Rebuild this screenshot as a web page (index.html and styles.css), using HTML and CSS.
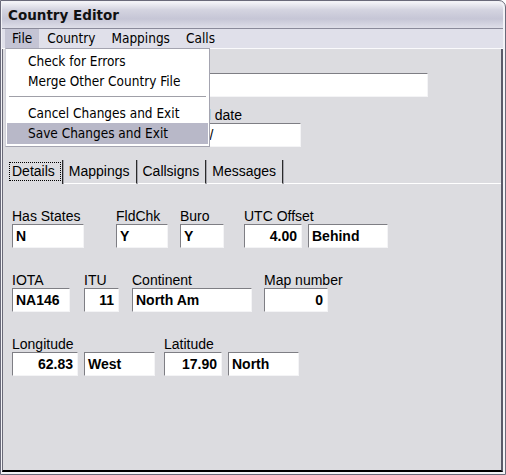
FILE: index.html
```html
<!doctype html>
<html lang="en">
<head>
    <meta charset="UTF-8">
    <meta name="viewport" content="width=device-width, initial-scale=1.0">
    <title>Country Editor</title>
    <link rel="stylesheet" href="styles.css">
</head>
<body>
<div class="window">
    <div class="titlebar">Country Editor</div>

    <div class="menubar">
        <span class="menu-item open">File</span>
        <span class="menu-item">Country</span>
        <span class="menu-item">Mappings</span>
        <span class="menu-item">Calls</span>
    </div>

    <div class="client">
        <!-- country header (mostly under the open menu) -->
        <div class="head">
            <div class="field f-name">
                <label></label>
                <div class="box"></div>
            </div>
            <div class="row head-dates">
                <div class="field f-start">
                    <label></label>
                    <div class="box date"></div>
                </div>
                <div class="field f-end">
                    <label>End date</label>
                    <div class="box date">     /</div>
                </div>
            </div>
        </div>

        <div class="tabs">
            <span class="tab selected"><span class="focus">Details</span></span>
            <span class="tab">Mappings</span>
            <span class="tab">Callsigns</span>
            <span class="tab">Messages</span>
            <span class="tab-fill"></span>
        </div>

        <!-- details page -->
        <div class="page">
            <div class="row">
                <div class="field f-states">
                    <label>Has States</label>
                    <div class="box">N</div>
                </div>
                <div class="field f-fldchk">
                    <label>FldChk</label>
                    <div class="box">Y</div>
                </div>
                <div class="field f-buro">
                    <label>Buro</label>
                    <div class="box">Y</div>
                </div>
                <div class="field f-utc">
                    <label>UTC Offset</label>
                    <div class="pair">
                        <div class="box num w-utc">4.00</div>
                        <div class="box w-dir">Behind</div>
                    </div>
                </div>
            </div>

            <div class="row">
                <div class="field f-iota">
                    <label>IOTA</label>
                    <div class="box">NA146</div>
                </div>
                <div class="field f-itu">
                    <label>ITU</label>
                    <div class="box num">11</div>
                </div>
                <div class="field f-continent">
                    <label>Continent</label>
                    <div class="box">North Am</div>
                </div>
                <div class="field f-map">
                    <label>Map number</label>
                    <div class="box num">0</div>
                </div>
            </div>

            <div class="row">
                <div class="field f-lon">
                    <label>Longitude</label>
                    <div class="pair">
                        <div class="box num w-lon">62.83</div>
                        <div class="box w-hemi">West</div>
                    </div>
                </div>
                <div class="field f-lat">
                    <label>Latitude</label>
                    <div class="pair">
                        <div class="box num w-lat">17.90</div>
                        <div class="box w-hemi">North</div>
                    </div>
                </div>
            </div>
        </div>
    </div>

    <!-- open File menu -->
    <ul class="dropdown">
        <li>Check for Errors</li>
        <li>Merge Other Country File</li>
        <li class="sep"></li>
        <li>Cancel Changes and Exit</li>
        <li class="hot">Save Changes and Exit</li>
    </ul>
</div>
</body>
</html>
```

FILE: styles.css
```css
* {
    box-sizing: border-box;
}

body {
    margin: 0;
    background: #fff;
}

.window {
    position: relative;
    width: 506px;
    height: 475px;
    display: flex;
    flex-direction: column;
    padding: 1px 2px 2px 1px;
    border: 1px solid #6a6a7a;
    border-radius: 0 7px 0 0;
    background: #f2f2f6;
    font-family: "Liberation Sans", Arial, sans-serif;
    font-size: 14px;
    color: #000;
}

.titlebar {
    height: 26px;
    padding-left: 6px;
    line-height: 26px;
    border-radius: 0 6px 0 0;
    background: linear-gradient(#f4f4f8 0%, #d4d4e0 30%, #c6c6d6 65%, #dedee8 100%);
    font-family: "DejaVu Sans", sans-serif;
    font-weight: bold;
    font-size: 13.5px;
    color: #111;
}

.menubar {
    display: flex;
    height: 21px;
    padding-left: 3px;
    border-top: 1px solid #8a8a9a;
    border-bottom: 1px solid #fafafc;
    background: #e0e0ea;
    font-family: "DejaVu Sans Condensed", "DejaVu Sans", sans-serif;
    font-size: 13.5px;
    line-height: 19px;

    .menu-item {
        padding: 0 8px;

        &.open {
            background: #c4c4d4;
            padding: 0 7px;
        }
    }
}

.client {
    flex: 1;
    border-left: 1px solid #6a6a78;
    border-right: 2px solid #5a5a6a;
    border-bottom: 2px solid #000;
    background: #dcdce0;
}

.row {
    display: flex;
}

.field {
    display: flex;
    flex-direction: column;

    label {
        height: 16px;
        line-height: 16px;
        white-space: nowrap;
    }
}

.pair {
    display: flex;
    gap: 6px;
}

.box {
    height: 24px;
    padding: 0 3px;
    border-top: 1px solid #7e7e84;
    border-left: 1px solid #7e7e84;
    border-right: 1px solid #f4f4f6;
    border-bottom: 1px solid #f4f4f6;
    background: #fff;
    font-weight: bold;
    line-height: 23px;
    white-space: pre;
    overflow: hidden;

    &.num {
        text-align: right;
        padding-right: 4px;
    }

    &.date {
        font-weight: normal;
    }
}

/* header block above the tabs */
.head {
    padding: 8px 0 0 9px;

    .f-name .box {
        width: 416px;
    }

    .head-dates {
        margin-top: 10px;
    }

    .f-start .box {
        width: 150px;
    }

    .f-end {
        margin-left: 24px;

        .box {
            width: 115px;
        }
    }
}

.tabs {
    display: flex;
    height: 24px;
    margin-top: 13px;
    padding-left: 2px;
    line-height: 23px;

    .tab {
        padding: 0 6px 0 5px;
        border-right: 1px solid #2a2a2a;
        border-bottom: 1px solid #fff;
        box-shadow: 1px 0 0 #a4a4ac;
        margin-right: 1px;

        &.selected {
            padding: 2px 1px 0 4px;
            border-bottom: none;
        }
    }

    .focus {
        display: block;
        height: 19px;
        padding: 0 5px 0 2px;
        line-height: 17px;
        border: 1px dotted #000;
    }

    .tab-fill {
        flex: 1;
        border-bottom: 1px solid #fff;
    }
}

.page {
    padding: 24px 0 0 9px;

    .row + .row {
        margin-top: 24px;
    }
}

/* details page field widths and spacing */
.f-states .box { width: 72px; }
.f-fldchk { margin-left: 32px; }
.f-fldchk .box { width: 52px; }
.f-buro { margin-left: 12px; }
.f-buro .box { width: 44px; }
.f-utc { margin-left: 20px; }
.w-utc { width: 58px; }
.w-dir { width: 80px; }

.f-iota .box { width: 58px; }
.f-itu { margin-left: 14px; }
.f-itu .box { width: 35px; }
.f-continent { margin-left: 13px; }
.f-continent .box { width: 120px; }
.f-map { margin-left: 12px; }
.f-map .box { width: 64px; }

.w-lon { width: 66px; }
.w-lat { width: 58px; }
.w-hemi { width: 71px; }
.f-lat { margin-left: 9px; }

.dropdown {
    position: absolute;
    left: 4px;
    top: 47px;
    width: 205px;
    margin: 0;
    padding: 2px 1px;
    list-style: none;
    background: #fff;
    border: 1px solid #a4a4b0;
    border-left-color: #d0d0d8;
    font-family: "DejaVu Sans Condensed", "DejaVu Sans", sans-serif;
    font-size: 13.5px;

    li {
        height: 20px;
        padding-left: 21px;
        line-height: 20px;
        white-space: nowrap;
    }

    .sep {
        height: 12px;
        margin: 0 2px;
        background: linear-gradient(transparent 5px, #a0a0a8 5px, #a0a0a8 6px, transparent 6px);
    }

    .hot {
        height: 21px;
        background: #b8b8c8;
    }
}
```
